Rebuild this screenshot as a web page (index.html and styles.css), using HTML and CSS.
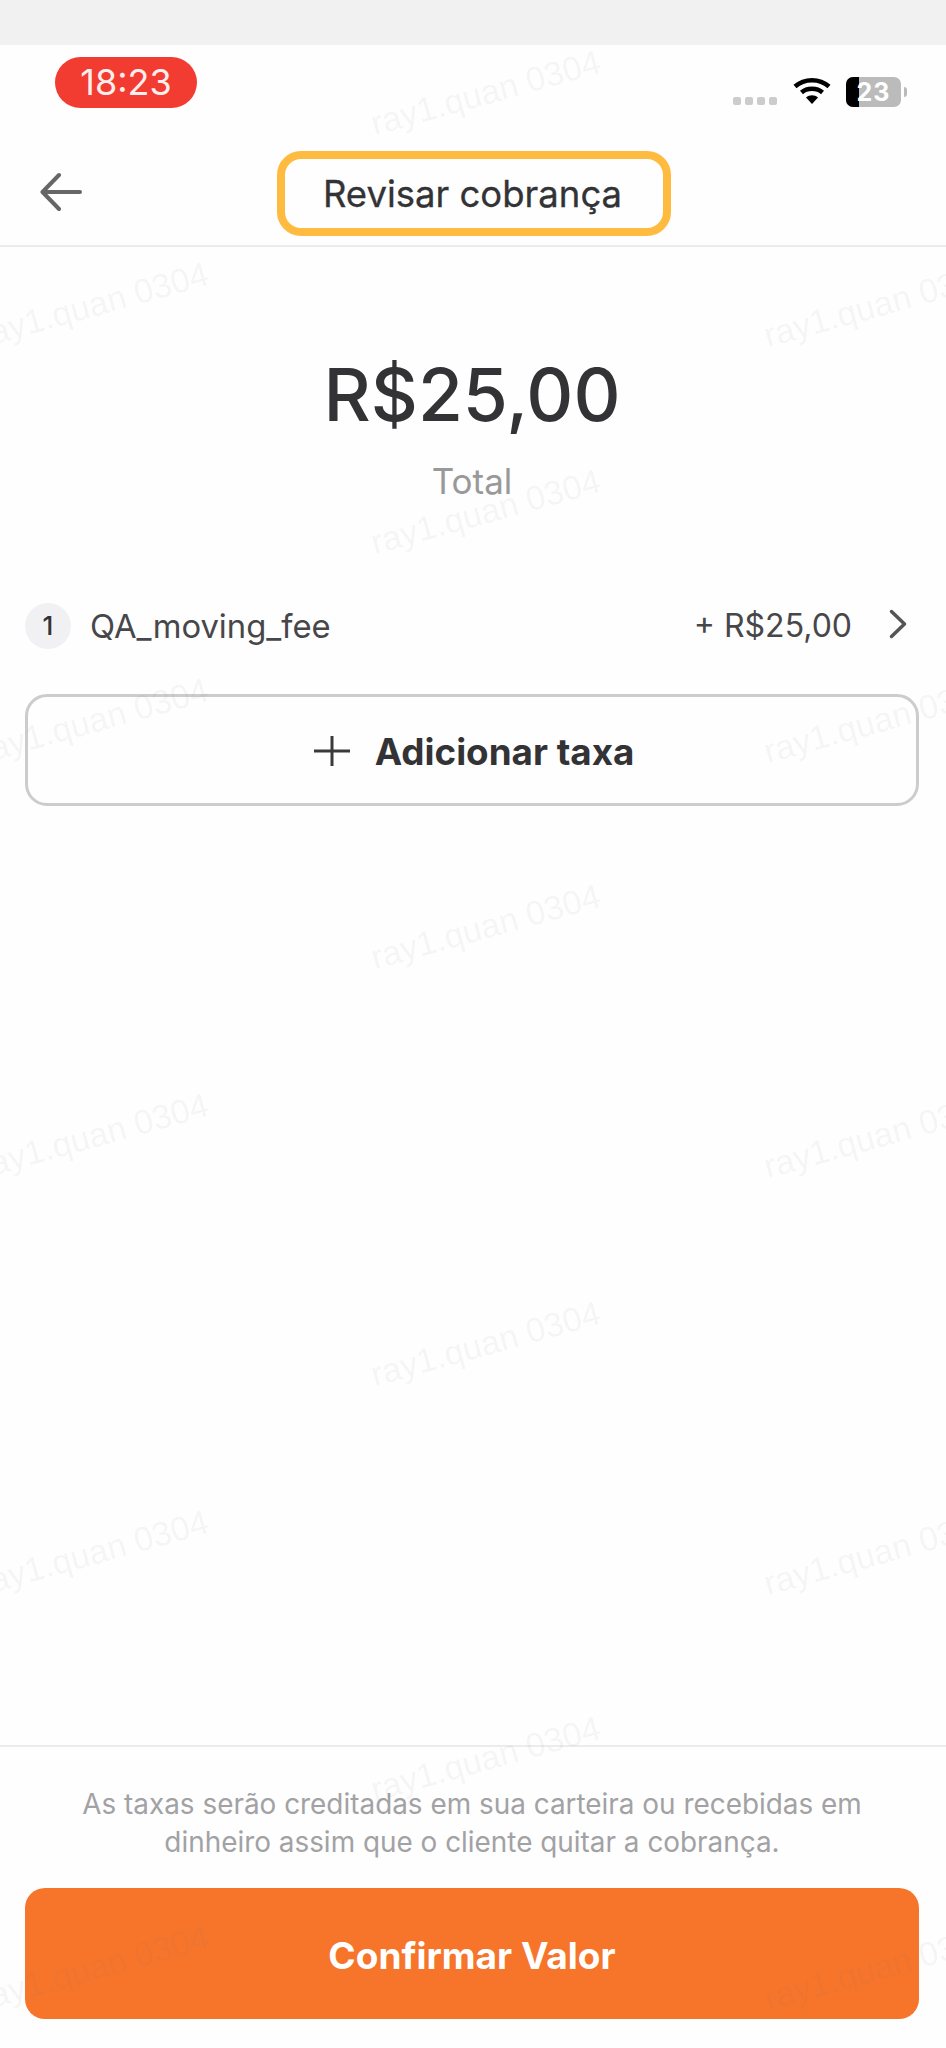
FILE: index.html
```html
<!DOCTYPE html>
<html lang="pt">
<head>
	<meta charset="utf-8">
	<title>Revisar cobrança</title>
	<link rel="stylesheet" href="styles.css">
</head>
<body>

<div class="screen">
	<div class="top-gap"></div>

	<div class="status">
		<span class="clock">18:23</span>
		<div class="status-icons">
			<div class="signal"><i></i><i></i><i></i><i></i></div>
			<svg class="wifi" width="38" height="28" viewBox="0 0 38 28">
				<path d="M2 9.5C11.5 1 26.500 1 36 9.500" fill="none" stroke="#000" stroke-width="4.500"/>
				<path d="M8.500 15.500C14 10.500 24 10.500 29.500 15.500" fill="none" stroke="#000" stroke-width="4.500"/>
				<path d="M13 20.500C16.500 17.500 21.500 17.500 25 20.500L19 27Z" fill="#000"/>
			</svg>
			<div class="battery"><span class="battery-level"></span><span class="battery-text">23</span></div>
			<span class="battery-tip"></span>
		</div>
	</div>

	<header class="header">
		<svg class="back" width="42" height="40" viewBox="0 0 42 40">
			<path d="M40 20H3M19 3L2.500 20L19 37" fill="none" stroke="#666" stroke-width="4" stroke-linecap="round" stroke-linejoin="round"/>
		</svg>
		<div class="title-box">Revisar cobrança</div>
	</header>

	<main class="content">
		<div class="summary">
			<div class="amount">R$25,00</div>
			<div class="total">Total</div>
		</div>

		<div class="fee-row">
			<span class="fee-num">1</span>
			<span class="fee-name">QA_moving_fee</span>
			<span class="fee-value">+ R$25,00</span>
			<svg class="chevron" width="18" height="30" viewBox="0 0 18 30">
				<path d="M2.500 2.500L15.500 15L2.500 27.500" fill="none" stroke="#555" stroke-width="3.500" stroke-linecap="round" stroke-linejoin="round"/>
			</svg>
		</div>

		<div class="add-fee">
			<svg width="36" height="30" viewBox="0 0 36 30">
				<path d="M0 15H36M18 0V30" fill="none" stroke="#3a3a3c" stroke-width="3"/>
			</svg>
			<span>Adicionar taxa</span>
		</div>
	</main>

	<footer class="footer">
		<p class="note">As taxas serão creditadas em sua carteira ou recebidas em<br>dinheiro assim que o cliente quitar a cobrança.</p>
		<div class="confirm">Confirmar Valor</div>
	</footer>

	<div class="watermarks">
		<span class="wm mid r1">ray1.quan 0304</span>
		<span class="wm mid r2">ray1.quan 0304</span>
		<span class="wm mid r3">ray1.quan 0304</span>
		<span class="wm mid r4">ray1.quan 0304</span>
		<span class="wm mid r5">ray1.quan 0304</span>
		<span class="wm left s1">ray1.quan 0304</span>
		<span class="wm left s2">ray1.quan 0304</span>
		<span class="wm left s3">ray1.quan 0304</span>
		<span class="wm left s4">ray1.quan 0304</span>
		<span class="wm left s5">ray1.quan 0304</span>
		<span class="wm right s1">ray1.quan 0304</span>
		<span class="wm right s2">ray1.quan 0304</span>
		<span class="wm right s3">ray1.quan 0304</span>
		<span class="wm right s4">ray1.quan 0304</span>
		<span class="wm right s5">ray1.quan 0304</span>
	</div>
</div>

</body>
</html>
```

FILE: styles.css
```css
html, body {
	margin: 0;
	padding: 0;
}

body {
	font-family: Inter, "Liberation Sans", sans-serif;
	color: #333336;
	background: #fefefe;
}

.screen {
	position: relative;
	width: 946px;
	height: 2048px;
	overflow: hidden;
	display: flex;
	flex-direction: column;
}

.top-gap {
	height: 45px;
	background: #f1f1f1;
}

/* status bar */
.status {
	height: 106px;
	box-sizing: border-box;
	padding: 12px 39px 0 55px;
	display: flex;
	justify-content: space-between;
	align-items: flex-start;
}

.clock {
	width: 142px;
	height: 51px;
	border-radius: 26px;
	background: #f23c32;
	color: #fbeeec;
	font-size: 36px;
	line-height: 51px;
	text-align: center;
}

.status-icons {
	display: flex;
	align-items: flex-start;
	margin-top: 20px;
}

.signal {
	display: flex;
	gap: 4px;
	margin: 20px 16px 0 0;
}

.signal i {
	width: 8px;
	height: 8px;
	border-radius: 2px;
	background: #ccc;
}

.wifi {
	margin-right: 15px;
}

.battery {
	position: relative;
	width: 55px;
	height: 30px;
	border-radius: 7px;
	background: #bbb;
	overflow: hidden;
	text-align: center;
}

.battery-level {
	position: absolute;
	left: 0;
	top: 0;
	width: 13px;
	height: 30px;
	background: #000;
}

.battery-text {
	position: relative;
	color: #fff;
	font-size: 25px;
	font-weight: 700;
	line-height: 30px;
	letter-spacing: 1px;
}

.battery-tip {
	width: 3px;
	height: 10px;
	margin: 10px 0 0 3px;
	border-radius: 0 3px 3px 0;
	background: #bbb;
}

/* header */
.header {
	height: 94px;
	border-bottom: 2px solid #ececec;
	position: relative;
	display: flex;
	justify-content: center;
	align-items: flex-start;
}

.back {
	position: absolute;
	left: 40px;
	top: 21px;
}

.title-box {
	width: 394px;
	height: 85px;
	box-sizing: border-box;
	margin-left: 2px;
	padding-right: 3px;
	border: 8px solid #ffbb40;
	border-radius: 24px;
	font-size: 36.500px;
	line-height: 70px;
	text-align: center;
	-webkit-text-stroke: 0.3px #333336;
}

/* main part */
.content {
	flex: 1;
	padding: 0 27px 0 25px;
	display: flex;
	flex-direction: column;
}

.summary {
	text-align: center;
	padding-top: 103px;
}

.amount {
	font-size: 73px;
	font-weight: 500;
	line-height: 90px;
}

.total {
	margin-top: 20px;
	font-size: 35px;
	line-height: 42px;
	color: #999;
}

.fee-row {
	display: flex;
	align-items: center;
	margin-top: 100px;
	height: 47px;
}

.fee-num {
	width: 46px;
	height: 46px;
	border-radius: 50%;
	background: #f1f1f3;
	font-size: 26px;
	font-weight: 500;
	line-height: 46px;
	text-align: center;
}

.fee-name {
	flex: 1;
	margin-left: 19px;
	font-size: 32.800px;
	color: #47474a;
}

.fee-value {
	font-size: 32px;
	color: #47474a;
}

.chevron {
	margin: -3px 12px 0 37px;
}

.add-fee {
	margin-top: 45px;
	height: 112px;
	box-sizing: border-box;
	border: 3px solid #ccc;
	border-radius: 22px;
	display: flex;
	justify-content: center;
	align-items: center;
	gap: 25px;
	font-size: 36.800px;
	font-weight: 700;
	padding: 2px 0 0 4px;
}

/* bottom part */
.footer {
	height: 303px;
	box-sizing: border-box;
	border-top: 2px solid #ececec;
	padding: 38px 27px 0 25px;
}

.note {
	margin: 0;
	font-size: 27.900px;
	line-height: 38px;
	color: #a2a2a5;
	text-align: center;
}

.confirm {
	margin-top: 27px;
	height: 131px;
	border-radius: 20px;
	background: #f7752b;
	color: #fff;
	font-size: 37px;
	font-weight: 700;
	line-height: 135px;
	text-align: center;
}

/* watermark over everything */
.watermarks {
	position: absolute;
	left: 0;
	top: 0;
	width: 946px;
	height: 2048px;
	pointer-events: none;
}

.wm {
	position: absolute;
	width: 246px;
	margin-left: -123px;
	margin-top: -20px;
	font-family: "Liberation Sans", sans-serif;
	font-size: 34px;
	line-height: 40px;
	white-space: nowrap;
	color: rgba(110, 110, 110, 0.07);
	transform: rotate(-15.500deg);
}

.mid { left: 490px; }
.left { left: 98px; }
.right { left: 883px; }

.r1 { top: 91px; }
.r2 { top: 510px; }
.r3 { top: 925px; }
.r4 { top: 1342px; }
.r5 { top: 1757px; }

.s1 { top: 303px; }
.s2 { top: 719px; }
.s3 { top: 1134px; }
.s4 { top: 1551px; }
.s5 { top: 1966px; }
```
